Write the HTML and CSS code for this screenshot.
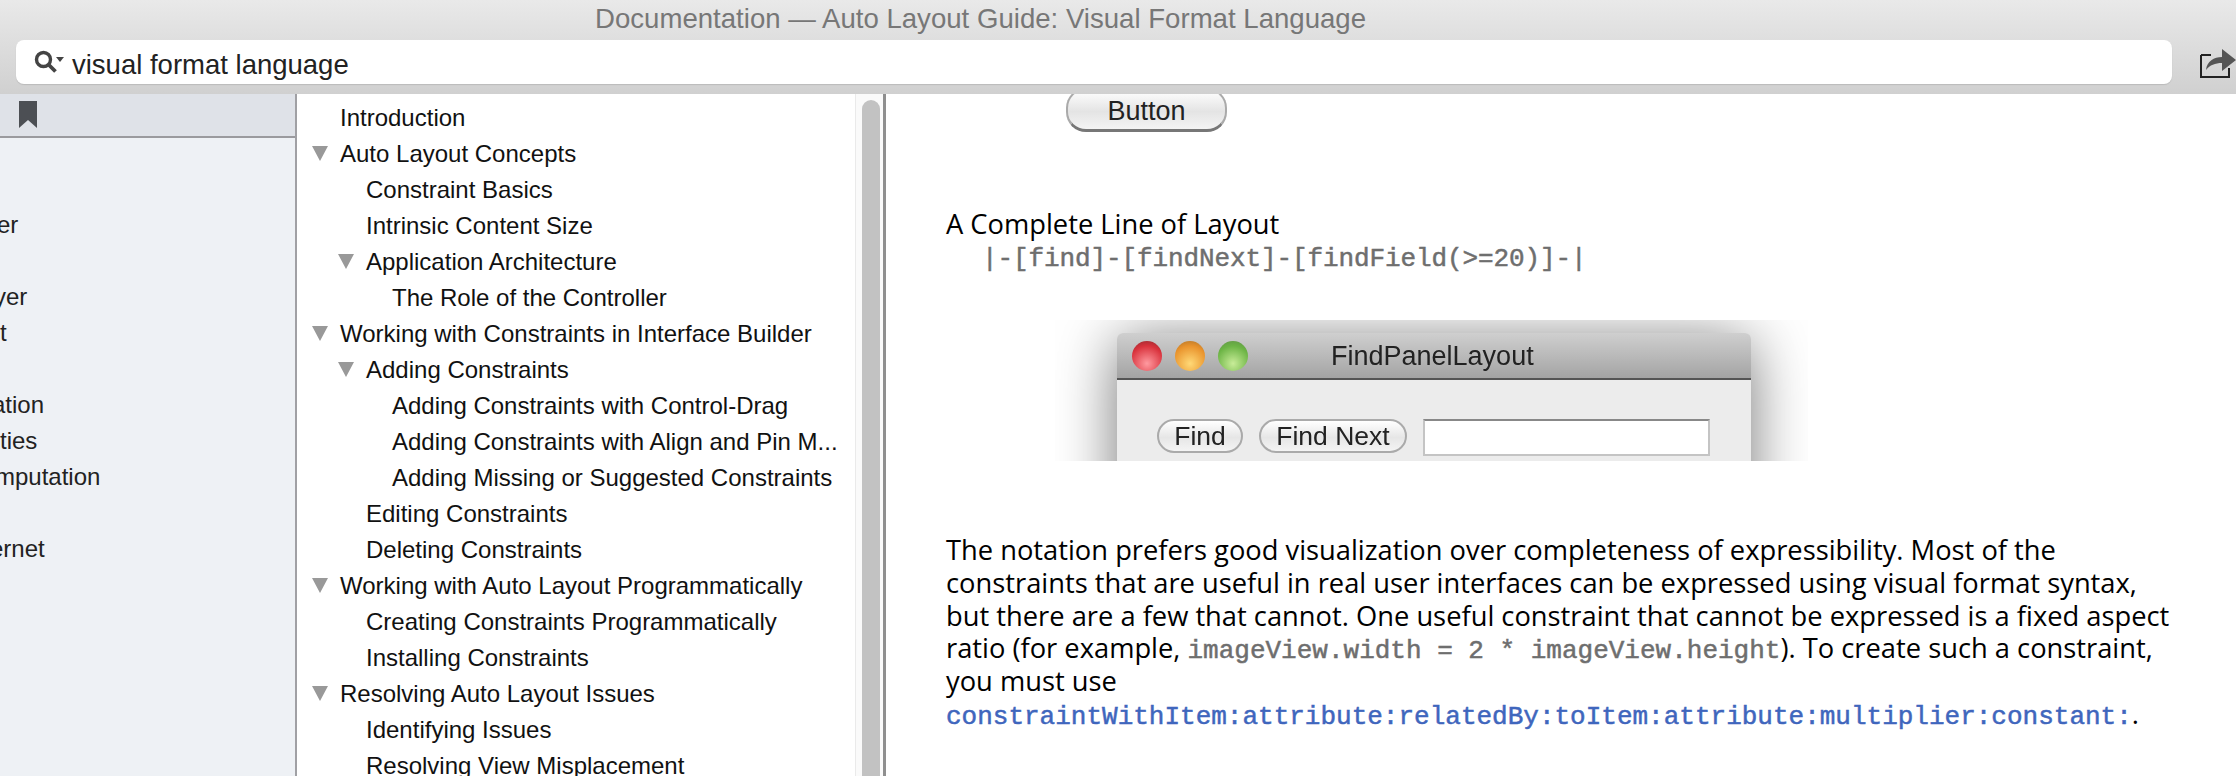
FILE: index.html
```html
<!DOCTYPE html>
<html lang="en">
<head>
    <meta charset="UTF-8">
    <title>Documentation — Auto Layout Guide: Visual Format Language</title>
    <link rel="stylesheet" href="styles.css">
</head>
<body>

<header class="titlebar">
    <div class="title">Documentation — Auto Layout Guide: Visual Format Language</div>
    <div class="search-row">
        <div class="search">
            <svg class="search-icon" width="30" height="24" viewBox="0 0 30 24">
                <circle cx="9.5" cy="9.5" r="7" fill="none" stroke="#444" stroke-width="3.4"/>
                <path d="M14.5 14.5l7 7" stroke="#444" stroke-width="3.8" fill="none"/>
                <path d="M22 7h8l-4 5z" fill="#444"/>
            </svg>
            <span>visual format language</span>
        </div>
        <svg class="share" width="36" height="30" viewBox="0 0 36 30">
            <path d="M1 7v22h28v-9M1 7h10" fill="none" stroke="#222" stroke-width="2"/>
            <path d="M6 22c1-9 8-13 16-13V1l14 11-14 11v-8c-7 0-12 2-16 7z" fill="#555"/>
        </svg>
    </div>
</header>

<main class="panes">
    <aside class="sidebar">
        <div class="sidebar-tools">
            <svg width="18" height="27" viewBox="0 0 18 27"><path d="M0 0h18v27l-9-8-9 8z" fill="#4c4f54"/></svg>
        </div>
        <ul class="results">
            <li></li>
            <li class="cut3">er</li>
            <li></li>
            <li class="cut6">yer</li>
            <li>t</li>
            <li></li>
            <li class="cut8">ation</li>
            <li>ties</li>
            <li class="cut5">mputation</li>
            <li></li>
            <li class="cut10">ernet</li>
        </ul>
    </aside>

    <nav class="toc">
        <ul>
            <li class="lv0">Introduction</li>
            <li class="lv0 open">Auto Layout Concepts</li>
            <li class="lv1">Constraint Basics</li>
            <li class="lv1">Intrinsic Content Size</li>
            <li class="lv1 open">Application Architecture</li>
            <li class="lv2">The Role of the Controller</li>
            <li class="lv0 open">Working with Constraints in Interface Builder</li>
            <li class="lv1 open">Adding Constraints</li>
            <li class="lv2">Adding Constraints with Control-Drag</li>
            <li class="lv2">Adding Constraints with Align and Pin M...</li>
            <li class="lv2">Adding Missing or Suggested Constraints</li>
            <li class="lv1">Editing Constraints</li>
            <li class="lv1">Deleting Constraints</li>
            <li class="lv0 open">Working with Auto Layout Programmatically</li>
            <li class="lv1">Creating Constraints Programmatically</li>
            <li class="lv1">Installing Constraints</li>
            <li class="lv0 open">Resolving Auto Layout Issues</li>
            <li class="lv1">Identifying Issues</li>
            <li class="lv1">Resolving View Misplacement</li>
        </ul>
    </nav>
    <div class="scroller"><div class="thumb"></div></div>

    <article class="doc">
        <div class="shot-button">Button</div>

        <p class="doc-heading">A Complete Line of Layout</p>
        <code class="vfl">|-[find]-[findNext]-[findField(&gt;=20)]-|</code>

        <div class="figure">
            <div class="window">
                <div class="window-bar">
                    <i class="light red"></i>
                    <i class="light orange"></i>
                    <i class="light green"></i>
                    <span class="window-title">FindPanelLayout</span>
                </div>
                <div class="window-body">
                    <span class="pill find">Find</span>
                    <span class="pill find-next">Find Next</span>
                    <span class="field"></span>
                </div>
            </div>
        </div>

        <p class="doc-text">
            The notation prefers good visualization over completeness of expressibility. Most of the<br>
            constraints that are useful in real user interfaces can be expressed using visual format syntax,<br>
            but there are a few that cannot. One useful constraint that cannot be expressed is a fixed aspect<br>
            ratio (for example, <code>imageView.width = 2 * imageView.height</code>). To create such a constraint,<br>
            you must use<br>
            <a href="#"><code>constraintWithItem:attribute:relatedBy:toItem:attribute:multiplier:constant:</code></a>.
        </p>
    </article>
</main>

</body>
</html>
```

FILE: styles.css
```css
html, body {
    margin: 0;
    height: 776px;
    overflow: hidden;
    background: #fff;
    font-family: "Liberation Sans", Arial, sans-serif;
}
ul {
    list-style: none;
    margin: 0;
    padding: 0;
}

/* top bar */
.titlebar {
    height: 94px;
    box-sizing: border-box;
    padding-top: 2px;
    background: linear-gradient(#e9e9e9, #d0d0d0);
}
.title {
    height: 38px;
    line-height: 34px;
    padding-left: 595px;
    font-size: 27.6px;
    color: #777;
    white-space: nowrap;
}
.search-row {
    display: flex;
    align-items: flex-start;
    padding-left: 16px;
}
.search {
    width: 2156px;
    height: 44px;
    flex: none;
    box-sizing: border-box;
    display: flex;
    align-items: center;
    padding-left: 18px;
    gap: 8px;
    background: #fff;
    border-radius: 8px;
    box-shadow: 0 1px 1px #bbb;
    font-size: 27.5px;
    color: #222;
}
.search span {
    padding-top: 5px;
}
.search-icon {
    flex: none;
}
.share {
    flex: none;
    margin: 8px 0 0 28px;
}

/* panes */
.panes {
    display: flex;
    height: 682px;
    overflow: hidden;
}
.sidebar {
    width: 295px;
    flex: none;
    background: #eef1f5;
    border-right: 2px solid #a0a0a4;
    font-size: 24px;
    color: #222;
}
.sidebar-tools {
    height: 44px;
    box-sizing: border-box;
    padding: 7px 0 0 19px;
    background: #dfe2e8;
    border-bottom: 2px solid #9a9a9e;
}
.results {
    padding-top: 33px;
}
.results li {
    height: 36px;
    line-height: 36px;
}
.cut3 { text-indent: -3px; }
.cut5 { text-indent: -5px; }
.cut6 { text-indent: -6px; }
.cut8 { text-indent: -8px; }
.cut10 { text-indent: -10px; }

.toc {
    width: 558px;
    flex: none;
    overflow: hidden;
    font-size: 24px;
    color: #111;
}
.toc li {
    position: relative;
    height: 36px;
    line-height: 36px;
    white-space: nowrap;
}
.toc ul {
    padding-top: 6px;
}
.lv0 { padding-left: 43px; }
.lv1 { padding-left: 69px; }
.lv2 { padding-left: 95px; }
.open::before {
    content: "";
    position: absolute;
    top: 10px;
    margin-left: -28px;
    border-left: 8px solid transparent;
    border-right: 8px solid transparent;
    border-top: 15px solid #999;
}

.scroller {
    width: 31px;
    flex: none;
    box-sizing: border-box;
    padding: 6px 3px 0 6px;
    background: #fafafa;
    border-left: 1px solid #eaeaea;
    border-right: 3px solid #8f8f8f;
}
.thumb {
    height: 800px;
    background: #c2c2c2;
    border-radius: 9px;
}

/* document */
.doc {
    flex: 1;
    padding-left: 60px;
    font-family: "Open Sans", sans-serif;
    font-size: 27.3px;
    color: #000;
    white-space: nowrap;
}
.doc code {
    font-family: "Liberation Mono", monospace;
    font-size: 26px;
    line-height: 1;
    -webkit-text-stroke: 0.5px;
    color: #6e6e6e;
}
.doc a {
    text-decoration: none;
}
.doc a code {
    color: #3f66bd;
}
.shot-button {
    width: 161px;
    height: 44px;
    margin: -6px 0 0 120px;
    box-sizing: border-box;
    padding-top: 3px;
    text-align: center;
    line-height: 36px;
    font-family: "Liberation Sans", sans-serif;
    font-size: 27px;
    color: #222;
    background: linear-gradient(#fff, #e4e4e4 55%, #f4f4f4);
    border: 2px solid #aaa;
    border-bottom: 3px solid #777;
    border-radius: 20px;
}
.doc-heading {
    margin: 75px 0 0;
    line-height: 33px;
}
.doc .vfl {
    display: block;
    padding: 3px 0 0 36px;
    line-height: 33px;
    letter-spacing: -0.1px;
}

.figure {
    width: 753px;
    height: 141px;
    margin: 44px 0 0 109px;
    padding: 13px 0 0 62px;
    box-sizing: border-box;
    overflow: hidden;
    filter: blur(0.4px);
}
.window {
    width: 634px;
    height: 200px;
    border-radius: 6px 6px 0 0;
    background: #ececec;
    box-shadow: 0 8px 60px rgba(0, 0, 0, .55);
}
.window-bar {
    position: relative;
    height: 47px;
    box-sizing: border-box;
    display: flex;
    align-items: center;
    gap: 13px;
    padding-left: 15px;
    background: linear-gradient(#cfcfcf, #a4a4a4);
    border-bottom: 2px solid #555;
    border-radius: 6px 6px 0 0;
}
.light {
    width: 30px;
    height: 30px;
    border-radius: 50%;
}
.red { background: radial-gradient(circle at 50% 75%, #ff9aa0, #d9323c 65%, #8a2a2e); }
.orange { background: radial-gradient(circle at 50% 75%, #ffd977, #e9932c 65%, #a8702a); }
.green { background: radial-gradient(circle at 50% 75%, #c8ec98, #6cb445 65%, #5f8f48); }
.window-title {
    position: absolute;
    left: 214px;
    padding-top: 2px;
    font-family: "Liberation Sans", sans-serif;
    font-size: 27px;
    color: #222;
}
.window-body {
    display: flex;
    padding: 39px 0 0 40px;
    font-family: "Liberation Sans", sans-serif;
    font-size: 26.5px;
    color: #222;
}
.pill {
    height: 34px;
    box-sizing: border-box;
    line-height: 30px;
    text-align: center;
    background: linear-gradient(#fff, #e6e6e6 55%, #f4f4f4);
    border: 2px solid #aaa;
    border-radius: 17px;
}
.find { width: 86px; }
.find-next { width: 148px; margin-left: 16px; }
.field {
    width: 287px;
    height: 37px;
    margin-left: 16px;
    box-sizing: border-box;
    background: #fff;
    border: 2px solid #c4c4c4;
    border-top-color: #888;
}
.doc-text {
    margin: 73px 0 0;
    line-height: 32.8px;
}
```
